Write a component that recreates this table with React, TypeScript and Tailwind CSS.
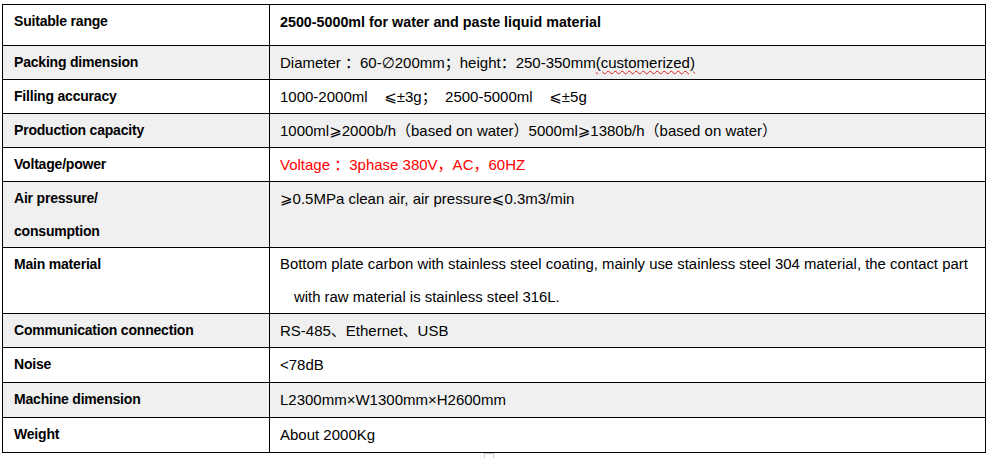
import React from "react";

type Row = {
  label: string;
  h: string;
  gray: boolean;
  value: React.ReactNode;
};

const ff = { fontFamily: '"Liberation Sans", Arial, "DejaVu Sans", "Noto Sans CJK SC", sans-serif' };

const rows: Row[] = [
  {
    label: "Suitable range",
    h: "h-[40px]",
    gray: false,
    value: <span className="font-bold text-[14.3px]">2500-5000ml for water and paste liquid material</span>,
  },
  {
    label: "Packing dimension",
    h: "h-[34px]",
    gray: true,
    value: (
      <span>
        Diameter ：60-∅200mm；height：250-350mm
        <span className="underline decoration-wavy decoration-[#e02020] decoration-1 underline-offset-2">(customerized)</span>
      </span>
    ),
  },
  {
    label: "Filling accuracy",
    h: "h-[34px]",
    gray: false,
    value: <span>1000-2000ml&nbsp;&nbsp;&nbsp;&nbsp;⩽±3g；&nbsp;&nbsp;2500-5000ml&nbsp;&nbsp;&nbsp;&nbsp;⩽±5g</span>,
  },
  {
    label: "Production capacity",
    h: "h-[34px]",
    gray: true,
    value: <span>1000ml⩾2000b/h（based on water）5000ml⩾1380b/h（based on water）</span>,
  },
  {
    label: "Voltage/power",
    h: "h-[34px]",
    gray: false,
    value: <span className="text-[#ff0000]">Voltage ：3phase 380V，AC，60HZ</span>,
  },
  {
    label: "",
    h: "h-[66px]",
    gray: true,
    value: <span>⩾0.5MPa clean air, air pressure⩽0.3m3/min</span>,
  },
  {
    label: "Main material",
    h: "h-[66px]",
    gray: false,
    value: (
      <div className="flex flex-col text-[14.9px]">
        <span>Bottom plate carbon with stainless steel coating, mainly use stainless steel 304 material, the contact part</span>
        <span className="pl-[14px]">with raw material is stainless steel 316L.</span>
      </div>
    ),
  },
  {
    label: "Communication connection",
    h: "h-[34px]",
    gray: true,
    value: <span>RS-485、Ethernet、USB</span>,
  },
  { label: "Noise", h: "h-[35px]", gray: false, value: <span>&lt;78dB</span> },
  { label: "Machine dimension", h: "h-[35px]", gray: true, value: <span>L2300mm×W1300mm×H2600mm</span> },
  { label: "Weight", h: "h-[35px]", gray: false, value: <span>About 2000Kg</span> },
];

export default function App() {
  return (
    <div className="w-[988px] h-[458px] bg-white relative overflow-hidden" style={ff}>
      <div className="pt-[4px] pl-[2px]">
        <div className="w-[984px] border border-black text-[15px] leading-[33px] text-black">
          {rows.map((r, i) => (
            <div
              key={i}
              className={`flex ${r.h} ${i > 0 ? "border-t border-black" : ""} ${r.gray ? "bg-[#f0f0f0]" : "bg-white"}`}
            >
              <div className="w-[267px] shrink-0 border-r border-black pl-[11px] font-bold text-[14px] tracking-[-0.2px]">
                {i === 5 ? (
                  <div className="flex flex-col">
                    <span>Air pressure/</span>
                    <span>consumption</span>
                  </div>
                ) : (
                  r.label
                )}
              </div>
              <div className="flex-1 pl-[10px]">{r.value}</div>
            </div>
          ))}
        </div>
      </div>
      <div className="absolute left-[484px] top-[453px] w-[10px] h-[5px] border-t border-l border-r border-[#ccc]"></div>
    </div>
  );
}
